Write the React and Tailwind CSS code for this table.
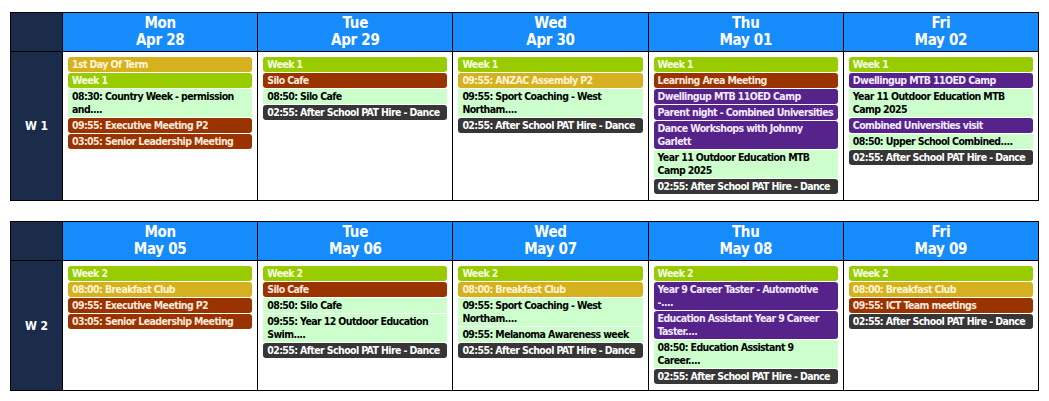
const C = {
  gold: 'bg-[#d5b120] text-[#fff6d5] rounded-[3px]',
  green: 'bg-[#99cc00] text-[#f4ffe0] rounded-[3px]',
  brown: 'bg-[#993300] text-[#ffe9dc] rounded-[3px]',
  purple: 'bg-[#55238a] text-[#f3eaff] rounded-[3px]',
  dark: 'bg-[#363636] text-white rounded-[3px]',
  light: 'bg-[#ccffcc] text-black',
};

const weeks = [
  {
    label: 'W 1',
    days: [
      {
        day: 'Mon',
        date: 'Apr 28',
        events: [
          ['gold', '1st Day Of Term'],
          ['green', 'Week 1'],
          ['light', '08:30: Country Week - permission and....'],
          ['brown', '09:55: Executive Meeting P2'],
          ['brown', '03:05: Senior Leadership Meeting'],
        ],
      },
      {
        day: 'Tue',
        date: 'Apr 29',
        events: [
          ['green', 'Week 1'],
          ['brown', 'Silo Cafe'],
          ['light', '08:50: Silo Cafe'],
          ['dark', '02:55: After School PAT Hire - Dance'],
        ],
      },
      {
        day: 'Wed',
        date: 'Apr 30',
        events: [
          ['green', 'Week 1'],
          ['gold', '09:55: ANZAC Assembly P2'],
          ['light', '09:55: Sport Coaching - West Northam....'],
          ['dark', '02:55: After School PAT Hire - Dance'],
        ],
      },
      {
        day: 'Thu',
        date: 'May 01',
        events: [
          ['green', 'Week 1'],
          ['brown', 'Learning Area Meeting'],
          ['purple', 'Dwellingup MTB 11OED Camp'],
          ['purple', 'Parent night - Combined Universities'],
          ['purple', 'Dance Workshops with Johnny Garlett'],
          ['light', 'Year 11 Outdoor Education MTB Camp 2025'],
          ['dark', '02:55: After School PAT Hire - Dance'],
        ],
      },
      {
        day: 'Fri',
        date: 'May 02',
        events: [
          ['green', 'Week 1'],
          ['purple', 'Dwellingup MTB 11OED Camp'],
          ['light', 'Year 11 Outdoor Education MTB Camp 2025'],
          ['purple', 'Combined Universities visit'],
          ['light', '08:50: Upper School Combined....'],
          ['dark', '02:55: After School PAT Hire - Dance'],
        ],
      },
    ],
  },
  {
    label: 'W 2',
    days: [
      {
        day: 'Mon',
        date: 'May 05',
        events: [
          ['green', 'Week 2'],
          ['gold', '08:00: Breakfast Club'],
          ['brown', '09:55: Executive Meeting P2'],
          ['brown', '03:05: Senior Leadership Meeting'],
        ],
      },
      {
        day: 'Tue',
        date: 'May 06',
        events: [
          ['green', 'Week 2'],
          ['brown', 'Silo Cafe'],
          ['light', '08:50: Silo Cafe'],
          ['light', '09:55: Year 12 Outdoor Education Swim....'],
          ['dark', '02:55: After School PAT Hire - Dance'],
        ],
      },
      {
        day: 'Wed',
        date: 'May 07',
        events: [
          ['green', 'Week 2'],
          ['gold', '08:00: Breakfast Club'],
          ['light', '09:55: Sport Coaching - West Northam....'],
          ['light', '09:55: Melanoma Awareness week'],
          ['dark', '02:55: After School PAT Hire - Dance'],
        ],
      },
      {
        day: 'Thu',
        date: 'May 08',
        events: [
          ['green', 'Week 2'],
          ['purple', 'Year 9 Career Taster - Automotive\n-....'],
          ['purple', 'Education Assistant Year 9 Career Taster....'],
          ['light', '08:50: Education Assistant 9 Career....'],
          ['dark', '02:55: After School PAT Hire - Dance'],
        ],
      },
      {
        day: 'Fri',
        date: 'May 09',
        events: [
          ['green', 'Week 2'],
          ['gold', '08:00: Breakfast Club'],
          ['brown', '09:55: ICT Team meetings'],
          ['dark', '02:55: After School PAT Hire - Dance'],
        ],
      },
    ],
  },
];

function EventChip({ kind, text }) {
  return (
    <div className={`whitespace-pre-line py-px pr-0 pl-[4px] text-[10.5px] font-bold leading-[13px] tracking-[-0.6px] ${C[kind]}`}>
      {text}
    </div>
  );
}

function WeekTable({ week }) {
  return (
    <div className="grid grid-cols-[51px_repeat(5,minmax(0,1fr))] border border-black">
      <div className="bg-[#1b2c4a]" />
      {week.days.map((d) => (
        <div
          key={d.day}
          className="border-l border-black bg-[#168cfc] pt-[2px] pb-[2px] text-center text-[15px] font-bold leading-[17px] tracking-[-0.3px] text-white"
        >
          <div>{d.day}</div>
          <div>{d.date}</div>
        </div>
      ))}
      <div className="flex items-center justify-center border-t border-black bg-[#1b2c4a] text-[12px] font-bold text-white">
        {week.label}
      </div>
      {week.days.map((d) => (
        <div key={d.day} className="flex flex-col gap-px border-t border-l border-black bg-white pt-[5px] pr-[5px] pb-[6px] pl-[5px]">
          {d.events.map((e, i) => (
            <EventChip key={i} kind={e[0]} text={e[1]} />
          ))}
        </div>
      ))}
    </div>
  );
}

export default function App() {
  return (
    <div
      className="flex h-[401px] w-[1049px] flex-col gap-[20px] bg-white pt-[12px] pl-[10px] pr-[10px]"
      style={{ fontFamily: '"DejaVu Sans Condensed", "DejaVu Sans", sans-serif' }}
    >
      {weeks.map((w) => (
        <WeekTable key={w.label} week={w} />
      ))}
    </div>
  );
}
